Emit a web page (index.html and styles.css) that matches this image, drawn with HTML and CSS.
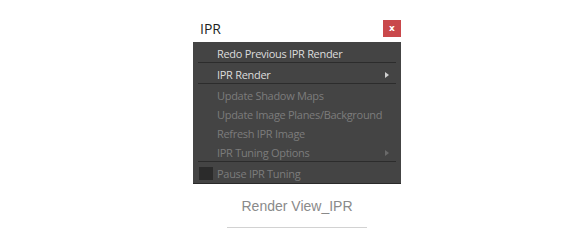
FILE: index.html
```html
<!DOCTYPE html>
<html lang="en">

<head>
  <meta charset="UTF-8" />
  <title>Render View_IPR</title>
  <link rel="stylesheet" href="styles.css">
</head>

<body>
  <div class="panel">
    <div class="header">
      <span class="title">IPR</span>
      <button class="close">x</button>
    </div>

    <div class="menu">
      <div class="item">Redo Previous IPR Render</div>
      <div class="sep"></div>
      <div class="item">IPR Render <span class="arrow"></span></div>
      <div class="sep"></div>
      <div class="item off">Update Shadow Maps</div>
      <div class="item off">Update Image Planes/Background</div>
      <div class="item off">Refresh IPR Image</div>
      <div class="item off">IPR Tuning Options <span class="arrow"></span></div>
      <div class="sep"></div>
      <div class="item off check"><span class="box"></span>Pause IPR Tuning</div>
    </div>

    <div class="caption">Render View_IPR</div>
    <div class="rule"></div>
  </div>
</body>

</html>
```

FILE: styles.css
```css
* {
  box-sizing: border-box;
  margin: 0;
  padding: 0;
}

body {
  background: #fff;
  font-family: 'Segoe UI', 'Open Sans', sans-serif;
}

.panel {
  width: 208px;
  margin-left: 193px;
  padding-top: 20px;
}

.header {
  height: 22px;
  display: flex;
  justify-content: space-between;
  align-items: flex-start;
  padding-left: 7px;
}

.title {
  font-size: 14px;
  line-height: 17px;
  color: #1e1e1e;
}

.close {
  width: 18px;
  height: 17px;
  border: none;
  background: #c9484b;
  color: #fff;
  font-family: 'DejaVu Sans', sans-serif;
  font-size: 9px;
  font-weight: 700;
  line-height: 17px;
}

.menu {
  background: #444;
  padding-top: 2px;
  border-bottom: 1px solid #2a2a2a;
}

.item {
  height: 19px;
  line-height: 19px;
  padding-left: 24px;
  font-size: 11px;
  letter-spacing: -0.3px;
  color: #dcdcdc;
  position: relative;
}

.item.off {
  color: #7c7c7c;
}

.sep {
  height: 1px;
  margin: -1px 5px 2px 5px;
  background: #2c2c2c;
}

.arrow {
  position: absolute;
  right: 12px;
  top: 7px;
  border-left: 4px solid #d0d0d0;
  border-top: 3px solid transparent;
  border-bottom: 3px solid transparent;
}

.off .arrow {
  border-left-color: #6a6a6a;
}

.check {
  padding-left: 6px;
  display: flex;
  align-items: center;
  gap: 4px;
}

.box {
  width: 14px;
  height: 13px;
  background: #2b2b2b;
}

.caption {
  margin-top: 12px;
  text-align: center;
  font-family: 'Liberation Sans', sans-serif;
  font-size: 14px;
  line-height: 20px;
  color: #8a8a8a;
}

.rule {
  width: 140px;
  height: 1px;
  margin: 11px auto 0;
  background: #d2d2d2;
}
```
